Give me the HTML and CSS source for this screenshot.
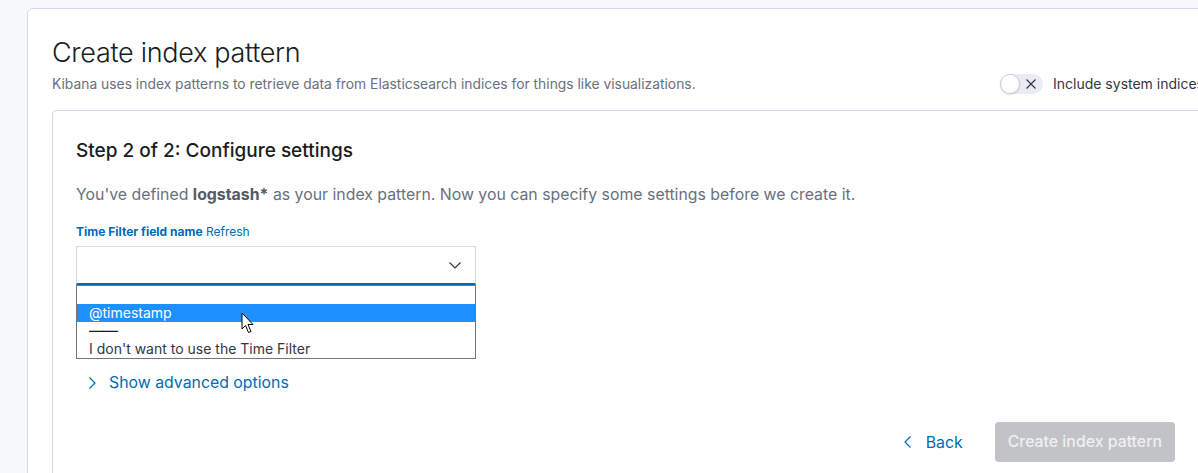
FILE: index.html
```html
<!DOCTYPE html>
<html lang="en">
<head>
<meta charset="utf-8">
<title>Create index pattern</title>
<link rel="stylesheet" href="styles.css">
</head>
<body>
<div class="page">
  <div class="outer">
    <div class="header">
      <div class="header-text">
        <h1 class="title">Create index pattern</h1>
        <p class="subtitle">Kibana uses index patterns to retrieve data from Elasticsearch indices for things like visualizations.</p>
      </div>
      <div class="switch">
        <span class="switch-track">
          <span class="switch-knob"></span>
          <svg class="switch-x" width="12" height="12" viewBox="0 0 12 12"><path d="M1.5 1.5 L10.5 10.5 M10.5 1.5 L1.5 10.5" stroke="#343741" stroke-width="1.2" fill="none"/></svg>
        </span>
        <span class="switch-label">Include system indices</span>
      </div>
    </div>

    <div class="inner">
      <h2 class="step-title">Step 2 of 2: Configure settings</h2>
      <p class="intro">You've defined <strong>logstash*</strong> as your index pattern. Now you can specify some settings before we create it.</p>

      <div class="form-row">
        <div class="label-row"><span class="label">Time Filter field name</span> <span class="refresh">Refresh</span></div>
        <div class="select">
          <svg class="select-arrow" width="16" height="16" viewBox="0 0 16 16"><path d="M2.5 5.5 L8 11 L13.5 5.5" stroke="#343741" stroke-width="1.2" fill="none"/></svg>
        </div>
        <div class="dropdown">
          <div class="opt"></div>
          <div class="opt opt-active">@timestamp</div>
          <div class="opt opt-sep">——</div>
          <div class="opt">I don't want to use the Time Filter</div>
          <svg class="cursor" width="14" height="22" viewBox="0 0 14 22"><path d="M1 1 L1 17 L4.5 13.5 L7.5 20.5 L10 19.5 L7 12.5 L12 12.5 Z" fill="#fff" stroke="#000" stroke-width="1" stroke-linejoin="miter"/></svg>
        </div>
      </div>

      <div class="advanced">
        <svg width="16" height="16" viewBox="0 0 16 16"><path d="M5.5 2.5 L11 8 L5.5 13.5" stroke="#006bb4" stroke-width="1.2" fill="none"/></svg>
        <span>Show advanced options</span>
      </div>

      <div class="footer">
        <div class="back">
          <svg width="16" height="16" viewBox="0 0 16 16"><path d="M10.5 2.5 L5 8 L10.5 13.5" stroke="#006bb4" stroke-width="1.2" fill="none"/></svg>
          <span>Back</span>
        </div>
        <div class="create-btn">Create index pattern</div>
      </div>
    </div>
  </div>
</div>
</body>
</html>
```

FILE: styles.css
```css
html, body {
  margin: 0;
  padding: 0;
}
body {
  background: #f7f8fc;
  font-family: Inter, "Noto Sans", sans-serif;
  color: #343741;
  overflow: hidden;
  width: 1198px;
  height: 473px;
}
.page {
  padding: 8px 0 0 27px;
  height: 465px;
  overflow: hidden;
}
.outer {
  box-sizing: border-box;
  width: 1198px;
  background: #fff;
  border: 1px solid #d3dae6;
  border-radius: 6px;
  padding: 26px 20px 0 24px;
  height: 520px;
}
.header {
  display: flex;
  justify-content: space-between;
  align-items: flex-end;
}
.title {
  margin: 0;
  font-size: 27px;
  font-weight: 300;
  line-height: 36px;
  color: #1a1c21;
  letter-spacing: -0.3px;
}
.subtitle {
  margin: 3px 0 0 0;
  font-size: 13.85px;
  line-height: 20px;
  color: #69707d;
}
.switch {
  display: flex;
  align-items: center;
  gap: 10px;
  margin-bottom: 0;
}
.switch-track {
  position: relative;
  display: flex;
  align-items: center;
  justify-content: flex-end;
  width: 43px;
  height: 20px;
  border-radius: 10px;
  background: #e9edf3;
  box-sizing: border-box;
  padding-right: 6px;
}
.switch-knob {
  position: absolute;
  left: 0;
  top: 0;
  width: 20px;
  height: 20px;
  box-sizing: border-box;
  border-radius: 50%;
  background: #fff;
  border: 1px solid #c9cfd8;
  box-shadow: 0 1px 2px rgba(0,0,0,0.12);
}
.switch-label {
  font-size: 14px;
  line-height: 20px;
  color: #343741;
  white-space: nowrap;
}
.inner {
  margin-top: 16px;
  border: 1px solid #d3dae6;
  border-radius: 4px;
  padding: 28px 28px 24px 23px;
  height: 400px;
}
.step-title {
  margin: 0;
  font-size: 19px;
  font-weight: 500;
  line-height: 24px;
  color: #1a1c21;
}
.intro {
  margin: 20px 0 0 0;
  font-size: 15.85px;
  line-height: 24px;
  color: #69707d;
}
.intro strong {
  color: #535966;
  font-weight: 700;
}
.form-row {
  margin-top: 16px;
  width: 400px;
}
.label-row {
  font-size: 12px;
  line-height: 18px;
  margin-bottom: 5px;
}
.label {
  color: #006bb4;
  font-weight: 700;
}
.refresh {
  color: #006bb4;
}
.select {
  position: relative;
  box-sizing: border-box;
  height: 39px;
  border: 1px solid #d5d8dc;
  border-bottom: 2px solid #006bb4;
  border-top-color: #d9dadc;
  background: #fff;
}
.select-arrow {
  position: absolute;
  right: 12px;
  top: 10px;
}
.dropdown {
  position: relative;
  box-sizing: border-box;
  border: 1px solid #767676;
  background: #fff;
  padding: 0;
}
.opt {
  height: 18px;
  line-height: 18px;
  font-size: 14px;
  padding-left: 12px;
  color: #343741;
}
.opt-active {
  background: #1e90ff;
  color: #fff;
}
.opt-sep {
  color: #1a1c21;
  letter-spacing: -1px;
  font-size: 15px;
}
.cursor {
  position: absolute;
  left: 164px;
  top: 26px;
}
.advanced {
  margin-top: 12px;
  display: flex;
  align-items: center;
  gap: 9px;
  padding-left: 8px;
  font-size: 15.85px;
  line-height: 24px;
  color: #006bb4;
}
.footer {
  margin-top: 27px;
  display: flex;
  justify-content: flex-end;
  align-items: center;
  gap: 32px;
  padding-right: 0;
}
.back {
  display: flex;
  align-items: center;
  gap: 10px;
  font-size: 15.85px;
  color: #006bb4;
}
.create-btn {
  box-sizing: border-box;
  height: 40px;
  padding: 0 13px;
  line-height: 40px;
  border-radius: 4px;
  background: #c2c3c6;
  color: #eff0f2;
  font-size: 15.85px;
  font-weight: 500;
}
```
